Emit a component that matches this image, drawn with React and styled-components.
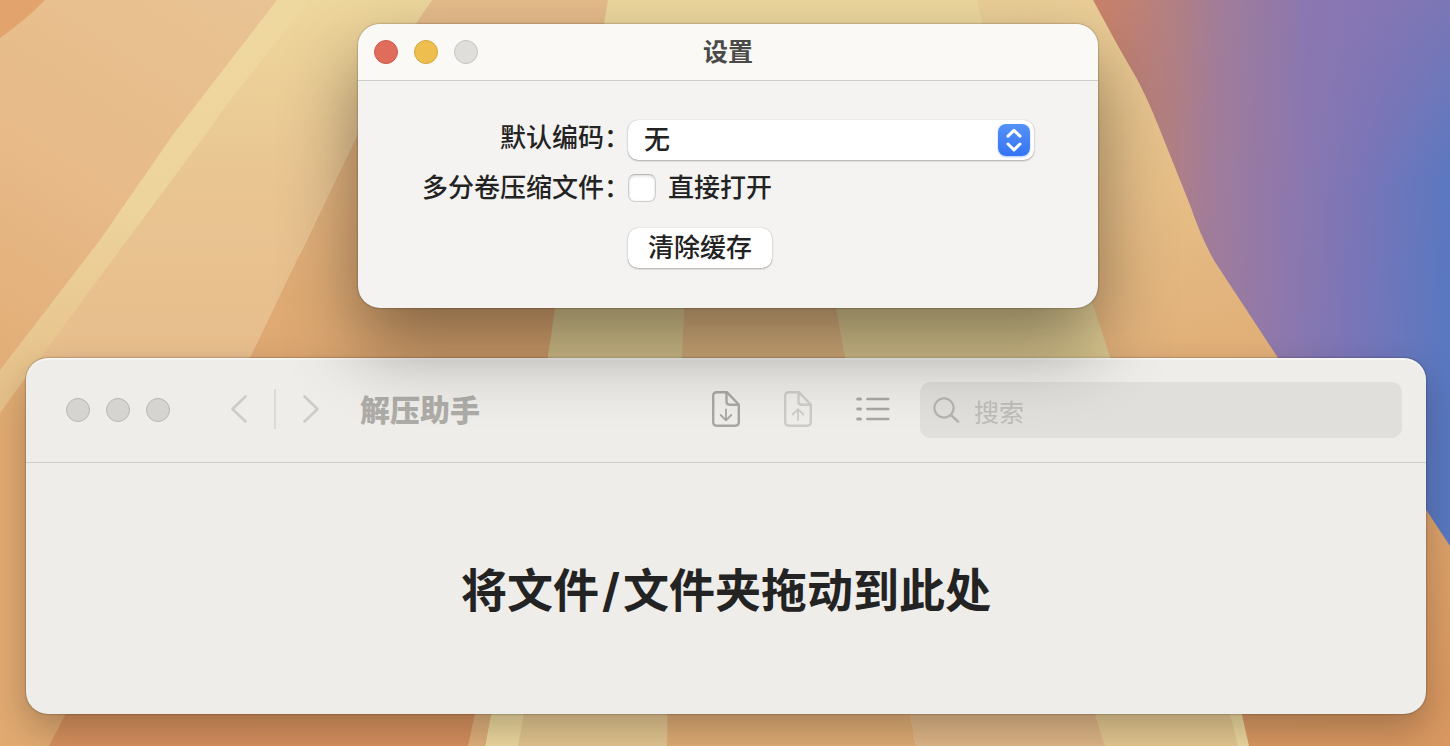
import React from 'react'
import styled, { createGlobalStyle, css } from 'styled-components'

const GlobalStyle = createGlobalStyle`
  * {
    box-sizing: border-box;
  }

  body {
    margin: 0;
    font-family: 'Inter', 'Noto Sans CJK SC', sans-serif;
    color: #232323;
  }

  button, input, select {
    font: inherit;
    color: inherit;
  }
`

const Desktop = styled.main`
  position: relative;
  isolation: isolate;
  display: flex;
  flex-direction: column;
  gap: 50px;
  min-height: 100vh;
  padding: 24px 24px 32px 26px;
  overflow: hidden;
`

const Wallpaper = styled.svg`
  position: absolute;
  inset: 0;
  z-index: -1;
  width: 100%;
  height: 100%;
`

const Window = styled.section`
  display: flex;
  flex-direction: column;
  border-radius: 22px;
`

const SettingsWindow = styled(Window)`
  position: relative;
  z-index: 1;
  align-self: center;
  width: 740px;
  max-width: 100%;
  margin-left: 4px;
  background: #f4f3f1;
  box-shadow: 0 0 2px rgba(0, 0, 0, 0.5), 0 36px 76px rgba(0, 0, 0, 0.42);
`

const MainWindow = styled(Window)`
  flex: 1;
  background: #eeede9;
  box-shadow: 0 0 2px rgba(0, 0, 0, 0.5), 0 16px 36px rgba(0, 0, 0, 0.24),
    inset 0 2px 1px rgba(255, 255, 255, 0.5);
`

const TitleBar = styled.header`
  display: grid;
  grid-template-columns: 1fr auto 1fr;
  align-items: center;
  height: 57px;
  padding: 0 16px;
  border-bottom: 1px solid #cfcecc;
  border-radius: 22px 22px 0 0;
  background: #faf9f5;
`

const Lights = styled.div`
  display: flex;
  gap: 16px;
`

const Light = styled.button`
  width: 24px;
  height: 24px;
  padding: 0;
  border: 1px solid ${({ $edge }) => $edge || '#b9b8b5'};
  border-radius: 50%;
  background: ${({ $fill }) => $fill || '#d5d4d1'};
`

const Title = styled.h1`
  margin: 0;
  font-size: 25px;
  line-height: 32px;
  font-weight: 700;
  color: #4a4a48;
`

const Form = styled.form`
  display: grid;
  grid-template-columns: 259px 406px;
  column-gap: 11px;
  padding: 39px 0 40px;
  font-size: 26px;
  line-height: 32px;
  font-weight: 500;
`

const FieldLabel = styled.label`
  display: flex;
  justify-content: flex-end;
  align-items: center;
  height: ${({ $height }) => $height}px;
  font-feature-settings: 'halt';
  white-space: nowrap;
`

const raised = css`
  height: 40px;
  border: 0;
  border-radius: 10px;
  background: #fff;
  box-shadow: 0 0 1px rgba(0, 0, 0, 0.3), 0 1px 2px rgba(0, 0, 0, 0.28);
`

const SelectBox = styled.div`
  display: grid;
  align-items: center;

  > * {
    grid-area: 1 / 1;
  }
`

const Select = styled.select`
  ${raised}
  width: 100%;
  padding: 0 48px 0 16px;
  appearance: none;
`

const Stepper = styled.svg`
  justify-self: end;
  width: 32px;
  height: 32px;
  margin-right: 4px;
  border-radius: 8px;
  background: linear-gradient(#5592f7, #3574f3);
  box-shadow: 0 1px 2px rgba(53, 116, 243, 0.4);
  pointer-events: none;
`

const CheckRow = styled.div`
  display: flex;
  align-items: center;
  gap: 12px;
  height: 56px;
`

const Checkbox = styled.input`
  width: 28px;
  height: 28px;
  margin: 0;
  appearance: none;
  border: 1px solid #cfcecc;
  border-top-color: #b8b7b5;
  border-radius: 7px;
  background: #fff;
  box-shadow: inset 0 1px 3px rgba(0, 0, 0, 0.16);
`

const ClearButton = styled.button`
  ${raised}
  grid-column: 2;
  justify-self: start;
  width: 144px;
  margin-top: 12px;
  padding: 0;
`

const Toolbar = styled.header`
  display: flex;
  align-items: center;
  height: 105px;
  padding: 0 24px 0 40px;
  border-bottom: 1px solid #cdccc9;
`

const NavGroup = styled.nav`
  display: flex;
  align-items: center;
  gap: 26px;
  margin-left: 60px;
  padding-bottom: 2px;
`

const Divider = styled.span`
  width: 2px;
  height: 40px;
  background: #dcdbd8;
`

const IconButton = styled.button`
  display: flex;
  padding: 0;
  border: 0;
  background: none;
  color: ${({ $faint }) => ($faint ? '#cdccc9' : '#a8a7a3')};
`

const AppTitle = styled(Title)`
  flex: 1;
  margin-left: 40px;
  font-size: 30px;
  line-height: 40px;
  font-weight: 900;
  color: #adaca8;
`

const Actions = styled.div`
  display: flex;
  align-items: center;
  gap: 44px;
  margin-right: 30px;
  padding-bottom: 2px;
`

const Search = styled.label`
  display: flex;
  align-items: center;
  gap: 14px;
  width: 482px;
  height: 56px;
  padding: 0 12px;
  border-radius: 10px;
  background: rgba(0, 0, 0, 0.06);
  color: #b5b4b1;
`

const SearchInput = styled.input`
  flex: 1;
  min-width: 0;
  padding: 6px 0 0;
  border: 0;
  outline: 0;
  background: none;
  font-size: 25px;
  line-height: 32px;

  &::placeholder {
    color: #bdbcb9;
    opacity: 1;
  }
`

const DropZone = styled.div`
  flex: 1;
  display: flex;
  align-items: center;
  justify-content: center;
  padding: 2px 24px 0;
`

const DropText = styled.h2`
  margin: 0;
  font-size: 46px;
  line-height: 64px;
  font-weight: 700;
`

const Slash = styled.span`
  margin: 0 3px;
`

const Rays = () => (
  <Wallpaper viewBox='0 0 1450 746' preserveAspectRatio='none' aria-hidden='true'>
    <defs>
      <linearGradient id='sand' gradientUnits='userSpaceOnUse' x1='280' y1='0' x2='0' y2='440'>
        <stop offset='0' stopColor='#e9c394' />
        <stop offset='0.5' stopColor='#e7ba88' />
        <stop offset='1' stopColor='#e1aa71' />
      </linearGradient>
      <linearGradient id='beam' x1='0' y1='0' x2='0' y2='1'>
        <stop offset='0' stopColor='#efd8a0' />
        <stop offset='0.5' stopColor='#edd39c' />
        <stop offset='1' stopColor='#e6bf88' />
      </linearGradient>
      <linearGradient id='glow' x1='0' y1='0' x2='0' y2='1'>
        <stop offset='0' stopColor='#eed79c' />
        <stop offset='0.5' stopColor='#e9c592' />
        <stop offset='1' stopColor='#e7bd8c' />
      </linearGradient>
      <linearGradient id='clay' x1='0' y1='0' x2='0' y2='1'>
        <stop offset='0' stopColor='#e6bd8c' />
        <stop offset='0.4' stopColor='#dfab74' />
        <stop offset='1' stopColor='#d68f5d' />
      </linearGradient>
      <linearGradient id='dune' gradientUnits='userSpaceOnUse' x1='1050' y1='0' x2='1250' y2='746'>
        <stop offset='0' stopColor='#ebcf98' />
        <stop offset='0.25' stopColor='#e7c089' />
        <stop offset='0.5' stopColor='#e1af78' />
        <stop offset='1' stopColor='#d99861' />
      </linearGradient>
      <linearGradient id='dusk' gradientUnits='userSpaceOnUse' x1='1095' y1='110' x2='1455' y2='128'>
        <stop offset='0' stopColor='#c9836a' />
        <stop offset='0.22' stopColor='#b07f85' />
        <stop offset='0.34' stopColor='#a07c9a' />
        <stop offset='0.54' stopColor='#8e78ac' />
        <stop offset='0.76' stopColor='#7875b8' />
        <stop offset='1' stopColor='#5a78c0' />
      </linearGradient>
      <linearGradient id='haze' gradientUnits='userSpaceOnUse' x1='1420' y1='0' x2='1460' y2='170'>
        <stop offset='0' stopColor='#8a76b2' stopOpacity='0.7' />
        <stop offset='1' stopColor='#8a76b2' stopOpacity='0' />
      </linearGradient>
    </defs>
    <path fill='url(#sand)' d='M0 0H300V746H0z' />
    <path fill='#e2a46c' d='M0 0h45Q28 18 0 38z' />
    <path fill='url(#glow)' d='M290 0h142Q408 30 357 135L250 358H36z' />
    <path fill='url(#beam)' d='M277 0h32C275 45 240 85 205 135L40 358 0 413V370L100 240 172 136z' />
    <path fill='url(#clay)' d='M432 0H620V746H49L250 358 357 135Q408 30 432 0z' />
    <path fill='#edd89e' d='M608 0H1000L1110 308 1260 746H485L548 357z' />
    <path fill='#dfcb92' d='M556 300H1100L1120 357H548z' />
    <path fill='#dfb681' d='M686 270H829L845 357V400H680z' />

    {/* lower ends of the rays, below the main window */}
    <path fill='#e0b07c' d='M480 690H496L485 746H468z' />
    <path fill='#e3c690' d='M528 690H668V746H518z' />
    <path fill='#dfac74' d='M668 690H906L916 746H667z' />
    <path fill='#dfb687' d='M906 690H1088L1105 746H916z' />
    <path fill='#e4c890' d='M1088 690H1224L1238 746H1105z' />

    <path fill='url(#dune)' d='M977 0H1450V746H1249L1232 670 1110 357 1094 308 986 40z' />
    <path
      fill='url(#dusk)'
      d='M1093 0H1450V546L1425 508 1278 358 1215 262Q1202 240 1190 205L1158 125Q1148 100 1137 79L1118 46z'
    />
    <path fill='url(#haze)' d='M1300 0H1450V200H1300z' />
  </Wallpaper>
)

const FileIcon = ({ up }) => (
  <svg width='28' height='36' viewBox='0 0 28 36' fill='none' stroke='currentColor' strokeWidth='2.4' strokeLinecap='round' strokeLinejoin='round' aria-hidden='true'>
    <path d='M15 1.3H5Q1.2 1.3 1.2 5V31Q1.2 34.7 5 34.7H23Q26.8 34.7 26.8 31V13.5z' />
    <path d='M14.5 2V10.5Q14.5 13.7 17.5 13.7H26' />
    {up ? (
      <path strokeWidth='1.8' d='M14 29V18.5M8.7 23.5L14 18.2l5.3 5.3' />
    ) : (
      <path strokeWidth='1.8' d='M14 18.5V29M8.7 24L14 29.3l5.3-5.3' />
    )}
  </svg>
)

const Chevron = ({ d }) => (
  <svg width='18' height='30' viewBox='0 0 18 30' fill='none' stroke='currentColor' strokeWidth='2.6' strokeLinecap='round' strokeLinejoin='round' aria-hidden='true'>
    <path d={d} />
  </svg>
)

const ListIcon = () => (
  <svg width='34' height='26' viewBox='0 0 34 26' fill='none' stroke='currentColor' strokeWidth='2.6' strokeLinecap='round' aria-hidden='true'>
    <path d='M11.4 3H32.2M11.4 13H32.2M11.4 23H32.2' />
    <path strokeWidth='3.2' d='M1.8 3H4.4M1.8 13H4.4M1.8 23H4.4' />
  </svg>
)

const SearchIcon = () => (
  <svg width='28' height='28' viewBox='0 0 28 28' fill='none' stroke='currentColor' strokeWidth='2.2' strokeLinecap='round' aria-hidden='true'>
    <circle cx='12' cy='12' r='9.6' />
    <path strokeWidth='2.6' d='M19 19l7 6.6' />
  </svg>
)

const Settings = () => (
  <SettingsWindow>
    <TitleBar>
      <Lights>
        <Light aria-label='关闭' $fill='#e06c5b' $edge='#c95d4c' />
        <Light aria-label='最小化' $fill='#eebf4e' $edge='#d3a542' />
        <Light aria-label='缩放' $fill='#dfdeda' $edge='#c6c5c2' disabled />
      </Lights>
      <Title>设置</Title>
    </TitleBar>
    <Form>
      <FieldLabel htmlFor='encoding' $height={36}>默认编码：</FieldLabel>
      <SelectBox>
        <Select id='encoding'>
          <option>无</option>
        </Select>
        <Stepper viewBox='0 0 32 32' fill='none' stroke='#fff' strokeWidth='3' strokeLinecap='round' strokeLinejoin='round' aria-hidden='true'>
          <path d='M10 12.2L16 6.4l6 5.8M10 20L16 25.8l6-5.8' />
        </Stepper>
      </SelectBox>
      <FieldLabel as='span' $height={56}>多分卷压缩文件：</FieldLabel>
      <CheckRow>
        <Checkbox type='checkbox' id='volumes' />
        <label htmlFor='volumes'>直接打开</label>
      </CheckRow>
      <ClearButton type='button'>清除缓存</ClearButton>
    </Form>
  </SettingsWindow>
)

const Extractor = () => (
  <MainWindow>
    <Toolbar>
      <Lights>
        <Light aria-label='关闭' />
        <Light aria-label='最小化' />
        <Light aria-label='缩放' />
      </Lights>
      <NavGroup>
        <IconButton $faint aria-label='后退'>
          <Chevron d='M15.5 2.5L2.5 15l13 12.5' />
        </IconButton>
        <Divider />
        <IconButton $faint aria-label='前进'>
          <Chevron d='M2.5 2.5L15.5 15l-13 12.5' />
        </IconButton>
      </NavGroup>
      <AppTitle as='h2'>解压助手</AppTitle>
      <Actions>
        <IconButton aria-label='解压'><FileIcon /></IconButton>
        <IconButton $faint aria-label='压缩'><FileIcon up /></IconButton>
        <IconButton aria-label='列表'><ListIcon /></IconButton>
      </Actions>
      <Search>
        <SearchIcon />
        <SearchInput type='text' placeholder='搜索' />
      </Search>
    </Toolbar>
    <DropZone>
      <DropText>将文件<Slash>/</Slash>文件夹拖动到此处</DropText>
    </DropZone>
  </MainWindow>
)

const App = () => (
  <>
    <GlobalStyle />
    <Desktop>
      <Rays />
      <Settings />
      <Extractor />
    </Desktop>
  </>
)

export default App
